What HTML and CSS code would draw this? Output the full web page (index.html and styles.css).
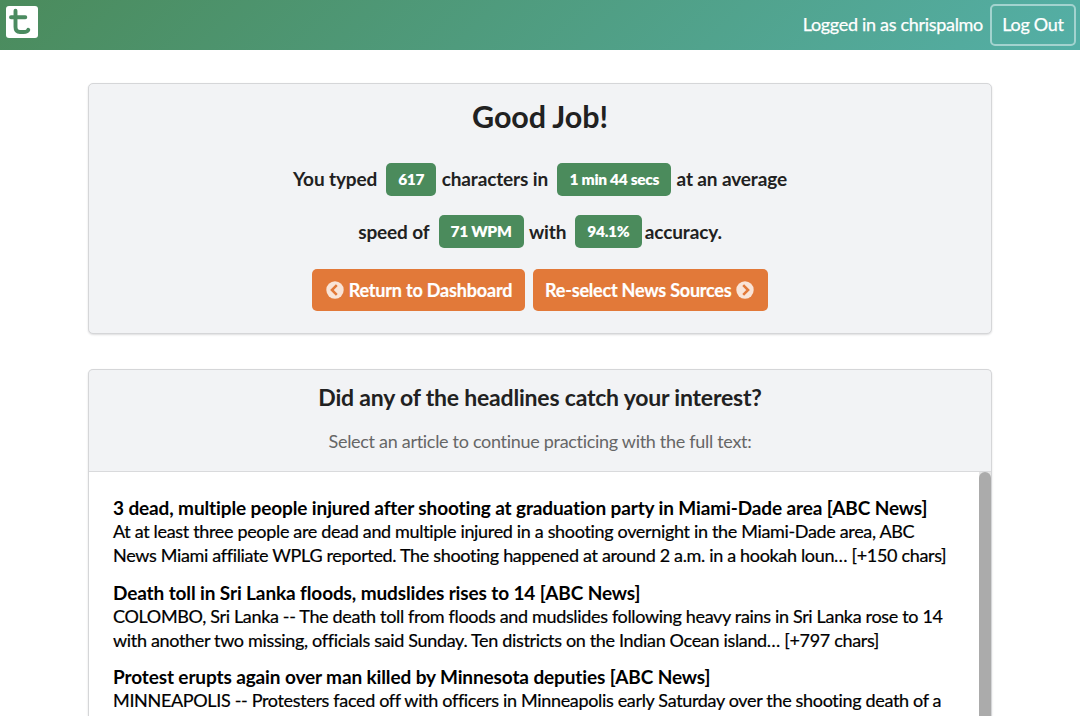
FILE: index.html
```html
<!DOCTYPE html>
<html lang="en">
<head>
<meta charset="utf-8">
<title>Typing results</title>
<link rel="stylesheet" href="styles.css">
</head>
<body>
<header class="navbar">
  <svg class="logo" viewBox="0 0 32 32" width="32" height="32" role="img" aria-label="Home">
    <rect width="32" height="32" rx="3" fill="#fff"/>
    <path d="M9.5 4.8V21Q9.5 26 14 26H17.5Q21.5 26 22.3 23.8M5 11.3H19.3" fill="none" stroke="#4b8b60" stroke-width="3.9" stroke-linecap="round" stroke-linejoin="round"/>
  </svg>
  <div class="account">
    <span class="user">Logged in as chrispalmo</span>
    <button class="logout">Log Out</button>
  </div>
</header>
<main class="page">
  <section class="card results">
    <h1 class="title">Good Job!</h1>
    <p class="stat-line">You typed <span class="label">617</span> characters in <span class="label time">1 min 44 secs</span> at an average</p>
    <p class="stat-line second">speed of <span class="label speed">71 WPM</span> with <span class="label accuracy">94.1%</span> accuracy.</p>
    <div class="actions">
      <button class="action back"><svg class="icon" viewBox="0 0 18 18" width="18" height="18"><circle cx="9" cy="9" r="8.7" fill="#f9e4d7"/><path d="M10.8 4.1L5.9 9l4.9 4.9" fill="none" stroke="#e27939" stroke-width="2.5"/></svg><span>Return to Dashboard</span></button>
      <button class="action next"><span>Re-select News Sources</span><svg class="icon" viewBox="0 0 18 18" width="18" height="18"><circle cx="9" cy="9" r="8.7" fill="#f9e4d7"/><path d="M7.2 4.1L12.1 9l-4.9 4.9" fill="none" stroke="#e27939" stroke-width="2.5"/></svg></button>
    </div>
  </section>
  <section class="card news">
    <header class="news-head">
      <h2 class="news-title">Did any of the headlines catch your interest?</h2>
      <p class="news-sub">Select an article to continue practicing with the full text:</p>
    </header>
    <div class="news-body">
      <div class="articles">
        <article class="article"><h3 class="headline">3 dead, multiple people injured after shooting at graduation party in Miami-Dade area [ABC News]</h3>
        <p class="excerpt">At at least three people are dead and multiple injured in a shooting overnight in the Miami-Dade area, ABC<br>News Miami affiliate WPLG reported. The shooting happened at around 2 a.m. in a hookah loun… [+150 chars]</p></article>
        <article class="article"><h3 class="headline">Death toll in Sri Lanka floods, mudslides rises to 14 [ABC News]</h3>
        <p class="excerpt">COLOMBO, Sri Lanka -- The death toll from floods and mudslides following heavy rains in Sri Lanka rose to 14<br>with another two missing, officials said Sunday. Ten districts on the Indian Ocean island… [+797 chars]</p></article>
        <article class="article"><h3 class="headline">Protest erupts again over man killed by Minnesota deputies [ABC News]</h3>
        <p class="excerpt">MINNEAPOLIS -- Protesters faced off with officers in Minneapolis early Saturday over the shooting death of a</p></article>
      </div>
      <div class="track"><div class="thumb"></div></div>
    </div>
  </section>
</main>
</body>
</html>
```
FILE: styles.css
```css
* { box-sizing: border-box; }
html { height: 716px; overflow: hidden; }
body { margin: 0; height: 716px; display: flex; flex-direction: column; overflow: hidden; background: #fff; font-family: Lato, "Liberation Sans", sans-serif; font-size: 18px; color: #212121; }
h1, h2, h3, p { margin: 0; white-space: nowrap; }
button { font-family: inherit; margin: 0; }
.navbar { flex: none; height: 50px; display: flex; align-items: center; justify-content: space-between; padding: 0 4px 0 6px; background: linear-gradient(135deg, #4b8b5c, #54afa6); color: #fff; }
.logo { display: block; margin-top: -6px; }
.account { display: flex; align-items: center; gap: 7px; }
.user { margin-top: -2px; white-space: nowrap; letter-spacing: -.31px; -webkit-text-stroke: .25px; }
.logout { width: 86px; height: 42px; padding: 0 0 2px; border: 2px solid #a3d3cf; border-radius: 5px; background: transparent; color: #fff; font-size: 18px; letter-spacing: -.3px; -webkit-text-stroke: .25px; }
.page { flex: 1; min-height: 0; width: 904px; margin: 33px auto 0; display: flex; flex-direction: column; }
.card { border: 1px solid #d5d6d8; border-radius: 5px; box-shadow: 0 1px 2px rgba(34, 36, 38, .15); background: #f2f3f5; text-align: center; }
.results { flex: none; height: 251px; padding-top: 14px; }
.title { font-size: 30.5px; line-height: 36px; font-weight: 700; letter-spacing: -.1px; }
.stat-line { height: 33px; margin-top: 29px; display: flex; align-items: center; justify-content: center; font-size: 19px; font-weight: 700; letter-spacing: -.13px; line-height: 30px; }
.stat-line:not(.second) { line-height: 33px; padding-bottom: 2px; }
.second { margin-top: 19px; line-height: 31px; }
.label { flex: none; align-self: flex-start; height: 33px; margin: 0 5.5px 0 9px; padding: 0 12px; border-radius: 5px; background: #4b8b5c; color: #fff; font-size: 15.5px; line-height: 33px; letter-spacing: -.3px; font-weight: 800; }
.time { width: 114px; padding: 0 12.5px; }
.speed { width: 85px; }
.accuracy { width: 67px; margin: 0 3px 0 8.5px; }
.actions { display: flex; justify-content: center; gap: 8px; margin-top: 21px; }
.action { height: 42px; display: flex; align-items: center; justify-content: center; gap: 5px; padding: 0; border: 0; border-radius: 5px; background: #e27939; color: #fff; font-size: 18px; font-weight: 700; letter-spacing: -.18px; white-space: nowrap; -webkit-text-stroke: .2px; }
.back { width: 213px; padding-left: 1px; }
.next { width: 235px; gap: 4.5px; padding-right: 2px; letter-spacing: -.22px; }
.news { flex: 1; min-height: 0; margin-top: 35px; border-bottom: 0; border-radius: 5px 5px 0 0; overflow: hidden; display: flex; flex-direction: column; }
.news-head { flex: none; height: 102px; padding-top: 13px; border-bottom: 1px solid #d9dadc; }
.news-title { font-size: 23px; line-height: 28px; letter-spacing: -.2px; }
.news-sub { margin-top: 18px; line-height: 24px; letter-spacing: -.3px; color: #666; }
.news-body { flex: 1; min-height: 0; overflow: hidden; display: flex; justify-content: space-between; background: #fff; color: #000; text-align: left; }
.articles { padding: 24px 0 0 24px; }
.article { margin-bottom: 13.5px; }
.headline { font-size: 19px; line-height: 24px; letter-spacing: -.12px; }
.excerpt { margin-top: -1px; line-height: 24px; letter-spacing: -.335px; -webkit-text-stroke: .2px; }
.track { flex: none; width: 12px; background: #e6e6e6; }
.thumb { height: 100%; border-radius: 6px 6px 0 0; background: #ababab; }
```
